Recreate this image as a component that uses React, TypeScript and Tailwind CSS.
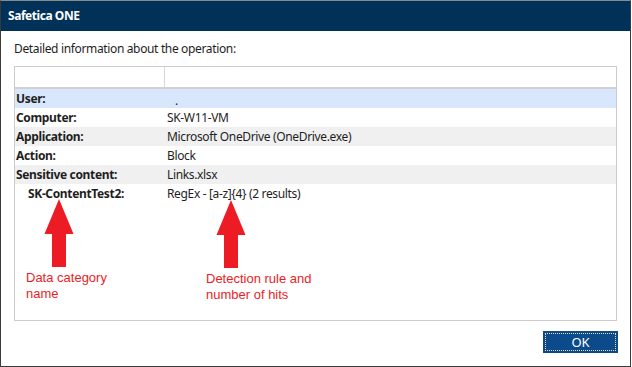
const rows = [
  { label: 'User:', value: '.', bg: 'bg-[#d9e7fd]', indent: false, dot: true },
  { label: 'Computer:', value: 'SK-W11-VM', bg: 'bg-white', indent: false },
  { label: 'Application:', value: 'Microsoft OneDrive (OneDrive.exe)', bg: 'bg-[#f0f0f0]', indent: false },
  { label: 'Action:', value: 'Block', bg: 'bg-white', indent: false },
  { label: 'Sensitive content:', value: 'Links.xlsx', bg: 'bg-[#f0f0f0]', indent: false },
  { label: 'SK-ContentTest2:', value: 'RegEx - [a-z]{4} (2 results)', bg: 'bg-white', indent: true },
];

function Arrow({ className }: { className: string }) {
  return (
    <svg className={className} width="30" height="69" viewBox="0 0 30 69">
      <path d="M15 0 L29.5 35 L22 35 L22 68 L8 68 L8 35 L0.5 35 Z" fill="#ed1c24" />
    </svg>
  );
}

export default function App() {
  return (
    <div
      className="relative w-[631px] h-[367px] bg-white border-x border-b border-[#3a3a3a] border-t border-t-[#8a8a8a] flex flex-col text-[12px] tracking-[-0.35px] text-[#1e1e1e]"
      style={{ fontFamily: '"Noto Sans", "Open Sans", sans-serif' }}
    >
      {/* Title bar */}
      <div className="h-[30px] bg-[#003259] flex items-center px-[7px]">
        <span className="text-white font-bold text-[12px] tracking-[-0.45px]">Safetica ONE</span>
      </div>

      <div className="flex-1 flex flex-col px-[13px]">
        <p className="mt-[9px] h-[17px] leading-[17px]">Detailed information about the operation:</p>

        {/* Details grid */}
        <div className="mt-[9px] h-[255px] border border-[#cccccc] bg-white flex flex-col">
          <div className="h-[22px] flex border-b-2 border-[#d0d0d0]">
            <div className="w-[150px] border-r border-[#d6d6d6]" />
            <div className="flex-1" />
          </div>
          {rows.map((r) => (
            <div key={r.label} className={`h-[19px] flex items-center ${r.bg}`}>
              <div className={`w-[152px] font-bold ${r.indent ? 'pl-[13px]' : 'pl-[1px]'}`}>{r.label}</div>
              <div className={r.dot ? 'pl-[8px] leading-[12px] pt-[4px]' : ''}>{r.value}</div>
            </div>
          ))}
        </div>

        {/* Buttons */}
        <div className="flex justify-end mt-[10px]">
          <button className="w-[75px] h-[22px] bg-[#0b4a8b] p-[2px] mr-[-1px]">
            <span className="flex items-center justify-center w-full h-full border border-dotted border-[#f3d8a8] text-white text-[13px] leading-none tracking-normal">
              OK
            </span>
          </button>
        </div>
      </div>

      {/* Annotations */}
      <Arrow className="absolute left-[43px] top-[198px]" />
      <Arrow className="absolute left-[215px] top-[199px]" />
      <div
        className="absolute left-[25px] top-[269px] text-[13px] leading-[16px] tracking-normal text-[#ed1c24]"
        style={{ fontFamily: '"Liberation Sans", Arial, sans-serif' }}
      >
        Data category
        <br />
        name
      </div>
      <div
        className="absolute left-[205px] top-[270px] text-[13px] leading-[16px] tracking-normal text-[#ed1c24]"
        style={{ fontFamily: '"Liberation Sans", Arial, sans-serif' }}
      >
        Detection rule and
        <br />
        number of hits
      </div>
    </div>
  );
}
